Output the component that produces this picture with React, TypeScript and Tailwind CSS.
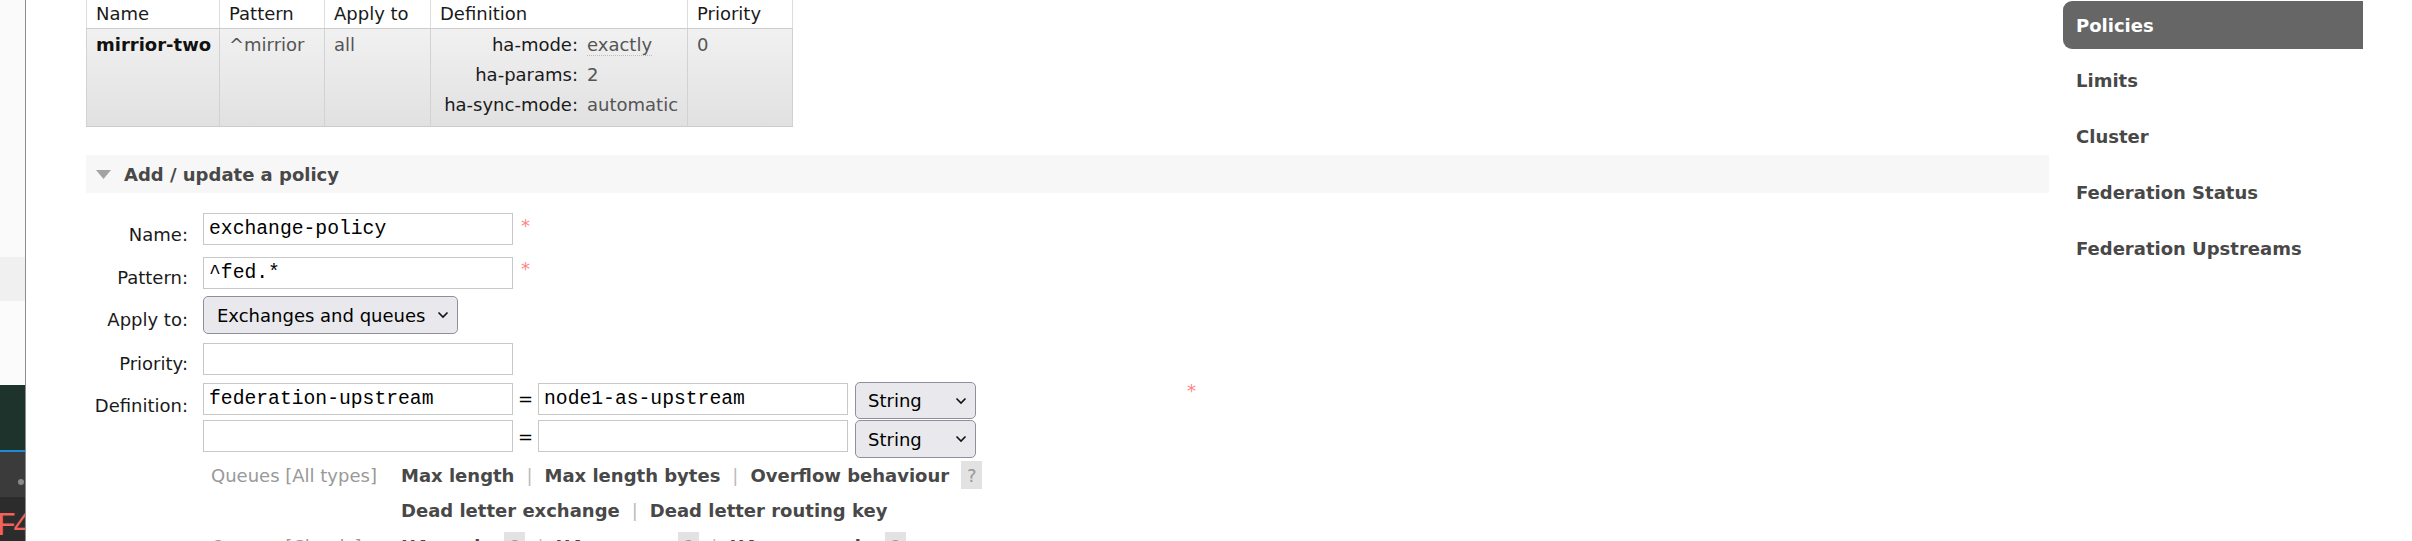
import clsx from "clsx";

const heads = ["Name", "Pattern", "Apply to", "Definition", "Priority"];
const defs = [
  ["ha-mode:", "exactly"],
  ["ha-params:", "2"],
  ["ha-sync-mode:", "automatic"],
];
const menu = ["Limits", "Cluster", "Federation Status", "Federation Upstreams"];

function Chevron() {
  return (
    <svg width="12" height="8" viewBox="0 0 12 8" className="shrink-0">
      <path d="M1.5 1.5 6 6l4.5-4.5" fill="none" stroke="#111" strokeWidth="1.6" />
    </svg>
  );
}

function TextBox({ value, className }: { value?: string; className?: string }) {
  return (
    <input readOnly value={value ?? ""}
      className={clsx("h-[32px] w-[310px] shrink-0 border border-[#c8c8c8] bg-white pl-[5px] font-['Liberation_Mono',monospace] text-[19.7px] text-black outline-none", className)} />
  );
}

function Select({ label, className }: { label: string; className?: string }) {
  return (
    <div className={clsx("flex shrink-0 items-center justify-between rounded-[5px] border border-[#8f8f9d] bg-[#e9e9ed] pr-[8px] text-black", className)}>
      <span>{label}</span>
      <Chevron />
    </div>
  );
}

function Label({ text, className }: { text: string; className?: string }) {
  return (
    <div className={clsx("w-[102px] shrink-0 text-right leading-[22px] text-[#1a1a1a]", className)}>{text}</div>
  );
}

function Star({ className }: { className?: string }) {
  return <span className={clsx("leading-[22px] text-[#ff8585]", className)}>*</span>;
}

function Help() {
  return (
    <span className="ml-[12px] flex h-[28px] w-[21px] items-center justify-center bg-[#e2e2e2] font-normal text-[#999]">?</span>
  );
}

function Sep() {
  return <span className="mx-[12px] font-normal text-[#bbb]">|</span>;
}

function LeftStrip() {
  return (
    <div className="flex h-full w-[25px] shrink-0 flex-col overflow-hidden">
      <div className="h-[257px] bg-[#fafafa]" />
      <div className="h-[44px] bg-[#f0f0f0]" />
      <div className="h-[84px] bg-[#fbfbfb]" />
      <div className="h-[65px] bg-[#1f332d]" />
      <div className="h-[2px] bg-[#1d8ad6]" />
      <div className="flex h-[45px] items-start bg-[#3b3b3b]">
        <div className="ml-[18px] mt-[27px] h-[6px] w-[6px] rounded-full bg-[#8a8a8a]" />
      </div>
      <div className="flex flex-1 items-start justify-end overflow-hidden bg-[#2c2c2c] pt-[12px]">
        <span className="mr-[-4px] font-['Liberation_Mono',monospace] text-[34px] leading-none tracking-[-4px] text-[#f0625a]">F4</span>
      </div>
    </div>
  );
}

export default function App() {
  return (
    <div className="flex h-[541px] w-[2412px] overflow-hidden bg-white font-['DejaVu_Sans',sans-serif] text-[18px] text-[#484848]">
      <LeftStrip />
      <div className="w-px shrink-0 bg-[#8d8d8d]" />

      <main className="w-[2023px] shrink-0 pl-[60px]">
        {/* policies table */}
        <div className="w-[707px]">
          <div className="grid h-[29px] grid-cols-[134px_105px_106px_257px_105px] border-b border-[#ccc] text-[#1a1a1a]">
            {heads.map((h, i) => (
              <div key={h} className={clsx("border-r border-[#ddd] pl-[9px] leading-[28px]", i === 0 && "border-l")}>{h}</div>
            ))}
          </div>
          <div className="grid h-[98px] grid-cols-[134px_105px_106px_257px_105px] border-b border-[#ccc] bg-linear-to-b from-[#f1f1f1] to-[#e1e1e1] leading-[30px]">
            <div className="border-l border-r border-[#d2d2d2] pl-[9px] pt-[1px] font-bold text-[#111]">mirrior-two</div>
            <div className="border-r border-[#d2d2d2] pl-[9px] pt-[1px] text-[#555]">^mirrior</div>
            <div className="border-r border-[#d2d2d2] pl-[9px] pt-[1px] text-[#555]">all</div>
            <div className="grid grid-cols-[135px_1fr] content-start gap-x-[9px] border-r border-[#d2d2d2] pl-[12px] pt-[1px]">
              {defs.map(([k, v]) => (
                <div key={k} className="contents">
                  <span className="text-right text-[#1a1a1a]">{k}</span>
                  <span className="text-[#555]">
                    <span className={clsx(k === "ha-mode:" && "border-b border-dotted border-[#bbb]")}>{v}</span>
                  </span>
                </div>
              ))}
            </div>
            <div className="border-r border-[#d2d2d2] pl-[9px] pt-[1px] text-[#555]">0</div>
          </div>
        </div>

        {/* section header */}
        <div className="mt-[28px] flex h-[38px] w-[1963px] items-center bg-[#f7f7f7]">
          <svg width="15" height="9" viewBox="0 0 15 9" className="ml-[10px]">
            <path d="M0 0h15L7.5 9z" fill="#a3a3a3" />
          </svg>
          <span className="ml-[13px] font-bold text-[#484848]">Add / update a policy</span>
        </div>

        {/* form */}
        <div className="mt-[20px]">
          <div className="flex items-start">
            <Label text="Name:" className="pt-[11px]" />
            <TextBox value="exchange-policy" className="ml-[15px]" />
            <Star className="ml-[8px] mt-[2px]" />
          </div>
          <div className="mt-[11px] flex items-start">
            <Label text="Pattern:" className="pt-[10px]" />
            <TextBox value="^fed.*" className="ml-[15px]" />
            <Star className="ml-[8px] mt-[1px]" />
          </div>
          <div className="mt-[7px] flex items-start">
            <Label text="Apply to:" className="pt-[13px]" />
            <Select label="Exchanges and queues" className="ml-[15px] h-[38px] w-[255px] pl-[13px]" />
          </div>
          <div className="mt-[9px] flex items-start">
            <Label text="Priority:" className="pt-[10px]" />
            <TextBox className="ml-[15px]" />
          </div>
          <div className="mt-[7px] flex items-start">
            <Label text="Definition:" className="pt-[13px]" />
            <div className="ml-[15px] flex flex-col">
              <div className="flex items-start">
                <TextBox value="federation-upstream" className="mt-[1px] h-[31px]" />
                <span className="w-[25px] shrink-0 text-center leading-[34px] text-black">=</span>
                <TextBox value="node1-as-upstream" className="mt-[1px] h-[31px]" />
                <Select label="String" className="ml-[7px] h-[37px] w-[121px] pl-[12px]" />
                <Star className="ml-[211px] mt-[-2px]" />
              </div>
              <div className="mt-[1px] flex items-start">
                <TextBox className="h-[31px]" />
                <span className="w-[25px] shrink-0 text-center leading-[34px] text-black">=</span>
                <TextBox className="h-[31px]" />
                <Select label="String" className="ml-[7px] h-[38px] w-[121px] pl-[12px]" />
              </div>
            </div>
          </div>

          {/* argument helpers */}
          <div className="mt-[3px] flex h-[28px] items-center pl-[117px]">
            <span className="w-[198px] shrink-0 pl-[8px] text-[#999]">Queues [All types]</span>
            <span className="flex items-center font-bold text-[#484848]">
              Max length<Sep />Max length bytes<Sep />Overflow behaviour<Help />
            </span>
          </div>
          <div className="mt-[6px] flex h-[30px] items-center pl-[315px]">
            <span className="flex items-center font-bold text-[#484848]">
              Dead letter exchange<Sep />Dead letter routing key
            </span>
          </div>
          <div className="mt-[7px] flex h-[28px] items-center pl-[117px]">
            <span className="w-[198px] shrink-0 pl-[8px] text-[#999]">Queues [Classic]</span>
            <span className="flex items-center font-bold text-[#484848]">
              HA mode<Help /><Sep />HA params<Help /><Sep />HA sync mode<Help />
            </span>
          </div>
        </div>
      </main>

      {/* side menu */}
      <nav className="ml-[14px] flex w-[300px] shrink-0 flex-col gap-[8px] pt-[1px] font-bold">
        <div className="flex h-[48px] items-center rounded-l-[9px] bg-[#666] pl-[13px] text-white">Policies</div>
        {menu.map(m => (
          <div key={m} className="flex h-[48px] items-center pb-[2px] pl-[13px] text-[#484848]">{m}</div>
        ))}
      </nav>
    </div>
  );
}
